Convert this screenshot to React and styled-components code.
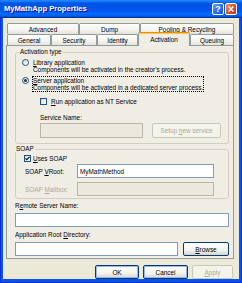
import React from "react";
import styled, { createGlobalStyle } from "styled-components";

const GlobalStyle = createGlobalStyle`
  html, body {
    margin: 0;
    padding: 0;
    background: #ffffff;
  }
`;

const PANEL_BG = "#f0eee4";

const Window = styled.div`
  width: 242px;
  height: 283px;
  display: flex;
  flex-direction: column;
  background: #0a55e6;
  box-shadow: inset 1px 0 #0831d9, inset -1px 0 #0831d9, inset 0 -1px #0831d9;
  font-family: "Liberation Sans", Arial, sans-serif;
  font-size: 6.4px;
  line-height: 7px;
  color: #000;
  overflow: hidden;
`;

const TitleBar = styled.div`
  height: 18px;
  flex-shrink: 0;
  display: flex;
  align-items: center;
  padding: 0 5px 0 4px;
  background: linear-gradient(
    to bottom,
    #0058ee 0%,
    #3593ff 4%,
    #288eff 6%,
    #127dff 8%,
    #036ffc 10%,
    #0262ee 14%,
    #0057e5 20%,
    #0054e3 24%,
    #0055eb 56%,
    #005bf5 66%,
    #026afe 76%,
    #0062ef 86%,
    #0052d6 92%,
    #0040ab 94%,
    #003092 100%
  );
`;

const Title = styled.div`
  flex: 1;
  color: #fff;
  font-weight: bold;
  font-size: 7.6px;
  line-height: 10px;
  white-space: nowrap;
  text-shadow: 1px 1px #0f1089;
`;

const CaptionButton = styled.div`
  width: 12px;
  height: 12px;
  box-sizing: border-box;
  margin-left: ${(p) => p.$ml || 0}px;
  border: 1px solid #fff;
  border-radius: 2px;
  display: flex;
  align-items: center;
  justify-content: center;
  color: #fff;
  font-weight: bold;
  font-size: 9px;
  line-height: 10px;
  background: ${(p) =>
    p.$close
      ? "linear-gradient(135deg, #ee9273 0%, #d9532c 50%, #c23a14 100%)"
      : "linear-gradient(135deg, #6ea3fb 0%, #2b70f1 50%, #1a55dc 100%)"};
`;

const Body = styled.div`
  flex: 1;
  margin: 0 3px 4px;
  padding: 5px 5px 0 3px;
  background: #ece9d8;
  display: flex;
  flex-direction: column;
`;

const TabStrip = styled.div`
  margin-left: 1px;
  width: 227px;
  display: flex;
  flex-direction: column;
`;

const TabRow = styled.div`
  display: flex;
  height: 11px;
`;

const Tab = styled.div`
  width: ${(p) => p.$w}px;
  height: ${(p) => (p.$active ? 14 : 11)}px;
  margin-top: ${(p) => (p.$active ? -2 : 0)}px;
  margin-bottom: ${(p) => (p.$active ? -1 : 0)}px;
  flex-shrink: 0;
  box-sizing: border-box;
  position: ${(p) => (p.$active ? "relative" : "static")};
  z-index: ${(p) => (p.$active ? 1 : "auto")};
  border: 1px solid #919b9c;
  border-bottom: none;
  border-top-color: ${(p) => (p.$active ? "#e68b2c" : "#919b9c")};
  border-radius: 2px 2px 0 0;
  box-shadow: ${(p) => (p.$active ? "inset 0 1px #ffc83c" : "none")};
  background: ${(p) =>
    p.$active ? PANEL_BG : "linear-gradient(#ffffff, #f4f3ee 60%, #e4e2da)"};
  display: flex;
  align-items: center;
  justify-content: center;
  white-space: nowrap;
`;

const Panel = styled.div`
  width: 228px;
  box-sizing: border-box;
  border: 1px solid #919b9c;
  background: ${PANEL_BG};
  padding: 0 4px 2px 8px;
  display: flex;
  flex-direction: column;
`;

const GroupBox = styled.div`
  margin-top: ${(p) => p.$mt}px;
  border: 1px solid #d0d0bf;
  border-radius: 3px;
  padding: 0 6px ${(p) => p.$pb}px;
  display: flex;
  flex-direction: column;
`;

const GroupLabel = styled.div`
  align-self: flex-start;
  margin: -5px 0 0 ${(p) => p.$ml}px;
  padding: 0 1px;
  height: 7px;
  background: ${PANEL_BG};
  white-space: nowrap;
`;

const Option = styled.div`
  display: flex;
  align-items: flex-start;
  margin-top: ${(p) => p.$mt}px;
`;

const Radio = styled.div`
  width: 7px;
  height: 7px;
  margin-top: 1px;
  flex-shrink: 0;
  box-sizing: border-box;
  border: 1px solid #1c5180;
  border-radius: 50%;
  background: linear-gradient(135deg, #dcd9cc, #ffffff);
  display: flex;
  align-items: center;
  justify-content: center;

  &::after {
    content: "";
    display: ${(p) => (p.$checked ? "block" : "none")};
    width: 3px;
    height: 3px;
    border-radius: 50%;
    background: #2d2d2d;
  }
`;

const OptionText = styled.div`
  margin-left: 3px;
  border: 1px dotted ${(p) => (p.$focus ? "#000" : "transparent")};
  display: flex;
  flex-direction: column;
`;

const Line = styled.div`
  height: 7px;
  white-space: nowrap;
`;

const CheckRow = styled.div`
  display: flex;
  align-items: center;
  height: 7px;
  margin-top: ${(p) => p.$mt}px;
  margin-left: ${(p) => p.$ml}px;
`;

const CheckBox = styled.div`
  width: 7px;
  height: 7px;
  flex-shrink: 0;
  box-sizing: border-box;
  border: 1px solid #1c5180;
  background: linear-gradient(135deg, #dcd9cc, #ffffff);
  display: flex;
  align-items: center;
  justify-content: center;
`;

const CheckText = styled.span`
  margin-left: ${(p) => p.$gap}px;
  white-space: nowrap;
`;

const FieldLabel = styled.div`
  height: 7px;
  flex-shrink: 0;
  width: ${(p) => (p.$w ? `${p.$w}px` : "auto")};
  margin-top: ${(p) => p.$mt || 0}px;
  margin-left: ${(p) => p.$ml || 0}px;
  color: ${(p) => (p.$disabled ? "#aca899" : "#000")};
  white-space: nowrap;
`;

const FieldRow = styled.div`
  display: flex;
  align-items: center;
  margin-top: ${(p) => p.$mt}px;
  margin-left: ${(p) => p.$ml || 0}px;
  gap: ${(p) => p.$gap || 0}px;
`;

const TextBox = styled.div`
  width: ${(p) => (p.$w ? `${p.$w}px` : "auto")};
  flex: none;
  height: ${(p) => p.$h}px;
  margin-top: ${(p) => p.$mt || 0}px;
  box-sizing: border-box;
  border: 1px solid ${(p) => (p.$disabled ? "#b9b6a8" : "#7f9db9")};
  background: ${(p) => (p.$disabled ? "#ebe9dd" : "#ffffff")};
  padding-left: 2px;
  display: flex;
  align-items: center;
  white-space: nowrap;
`;

const Button = styled.button`
  width: ${(p) => p.$w}px;
  height: ${(p) => p.$h || 14}px;
  flex-shrink: 0;
  box-sizing: border-box;
  margin: 0;
  padding: 0;
  font: inherit;
  border: 1px solid ${(p) => (p.disabled ? "#c9c7ba" : "#003c74")};
  border-radius: 2px;
  color: ${(p) => (p.disabled ? "#aca899" : "#000")};
  background: ${(p) =>
    p.disabled ? "#f5f4ea" : "linear-gradient(#ffffff, #f3f3ef 60%, #d8d4ca)"};
  box-shadow: ${(p) => (p.$focus ? "inset 0 0 0 1px #98b8ee" : "none")};
  display: flex;
  align-items: center;
  justify-content: center;
  white-space: nowrap;
`;

const ButtonRow = styled.div`
  display: flex;
  justify-content: flex-end;
  gap: 4px;
  margin: 6px 1px 0 0;
`;

const Key = styled.span`
  text-decoration: underline;
`;

const CheckMark = () => (
  <svg width="5" height="5" viewBox="0 0 5 5">
    <polyline points="0.5,2.3 1.8,3.7 4.5,0.8" fill="none" stroke="#1a1a1a" strokeWidth="1.2" />
  </svg>
);

const CloseGlyph = () => (
  <svg width="6" height="6" viewBox="0 0 6 6">
    <path d="M0.6 0.6 L5.4 5.4 M5.4 0.6 L0.6 5.4" stroke="#fff" strokeWidth="1.4" />
  </svg>
);

const backTabs = [
  { label: "Advanced", w: 72 },
  { label: "Dump", w: 61 },
  { label: "Pooling & Recycling", w: 94 },
];

const frontTabs = [
  { label: "General", w: 44 },
  { label: "Security", w: 46 },
  { label: "Identity", w: 41 },
  { label: "Activation", w: 52, active: true },
  { label: "Queuing", w: 44 },
];

export default function App() {
  return (
    <>
      <GlobalStyle />
      <Window>
        <TitleBar>
          <Title>MyMathApp Properties</Title>
          <CaptionButton>?</CaptionButton>
          <CaptionButton $close $ml={1}>
            <CloseGlyph />
          </CaptionButton>
        </TitleBar>
        <Body>
          <TabStrip>
            <TabRow>
              {backTabs.map((t) => (
                <Tab key={t.label} $w={t.w}>
                  {t.label}
                </Tab>
              ))}
            </TabRow>
            <TabRow>
              {frontTabs.map((t) => (
                <Tab key={t.label} $w={t.w} $active={t.active}>
                  {t.label}
                </Tab>
              ))}
            </TabRow>
          </TabStrip>
          <Panel>
            <GroupBox $mt={6} $pb={5}>
              <GroupLabel $ml={-3}>Activation type</GroupLabel>
              <Option $mt={3}>
                <Radio />
                <OptionText>
                  <Line>
                    <Key>L</Key>ibrary application
                  </Line>
                  <Line>Components will be activated in the creator's process.</Line>
                </OptionText>
              </Option>
              <Option $mt={2}>
                <Radio $checked />
                <OptionText $focus>
                  <Line>
                    <Key>S</Key>erver application
                  </Line>
                  <Line>Components will be activated in a dedicated server process.</Line>
                </OptionText>
              </Option>
              <CheckRow $mt={6} $ml={18}>
                <CheckBox />
                <CheckText $gap={4}>
                  <Key>R</Key>un application as NT Service
                </CheckText>
              </CheckRow>
              <FieldLabel $mt={9} $ml={18}>
                Service Name:
              </FieldLabel>
              <FieldRow $mt={2} $ml={18} $gap={9}>
                <TextBox $w={103} $h={15} $disabled />
                <Button $w={69} $h={15} disabled>
                  Setup&nbsp;<Key>n</Key>ew service
                </Button>
              </FieldRow>
            </GroupBox>

            <GroupBox $mt={5} $pb={2}>
              <GroupLabel $ml={-7}>SOAP</GroupLabel>
              <CheckRow $mt={3} $ml={2}>
                <CheckBox>
                  <CheckMark />
                </CheckBox>
                <CheckText $gap={2}>
                  <Key>U</Key>ses SOAP
                </CheckText>
              </CheckRow>
              <FieldRow $mt={2} $ml={3}>
                <FieldLabel $w={52}>
                  SOAP <Key>V</Key>Root:
                </FieldLabel>
                <TextBox $w={137} $h={14}>
                  MyMathMethod
                </TextBox>
              </FieldRow>
              <FieldRow $mt={4} $ml={3}>
                <FieldLabel $w={52} $disabled>
                  SOAP <Key>M</Key>ailbox:
                </FieldLabel>
                <TextBox $w={137} $h={14} $disabled />
              </FieldRow>
            </GroupBox>

            <FieldLabel $mt={3}>
              R<Key>e</Key>mote Server Name:
            </FieldLabel>
            <TextBox $h={14} $mt={4} />
            <FieldLabel $mt={4}>
              Application Root <Key>D</Key>irectory:
            </FieldLabel>
            <FieldRow $mt={4} $gap={5}>
              <TextBox $w={163} $h={14} />
              <Button $w={46} $h={14}>
                <Key>B</Key>rowse
              </Button>
            </FieldRow>
          </Panel>
          <ButtonRow>
            <Button $w={44} $focus>
              OK
            </Button>
            <Button $w={45} $focus>
              Cancel
            </Button>
            <Button $w={41} disabled>
              <Key>A</Key>pply
            </Button>
          </ButtonRow>
        </Body>
      </Window>
    </>
  );
}
